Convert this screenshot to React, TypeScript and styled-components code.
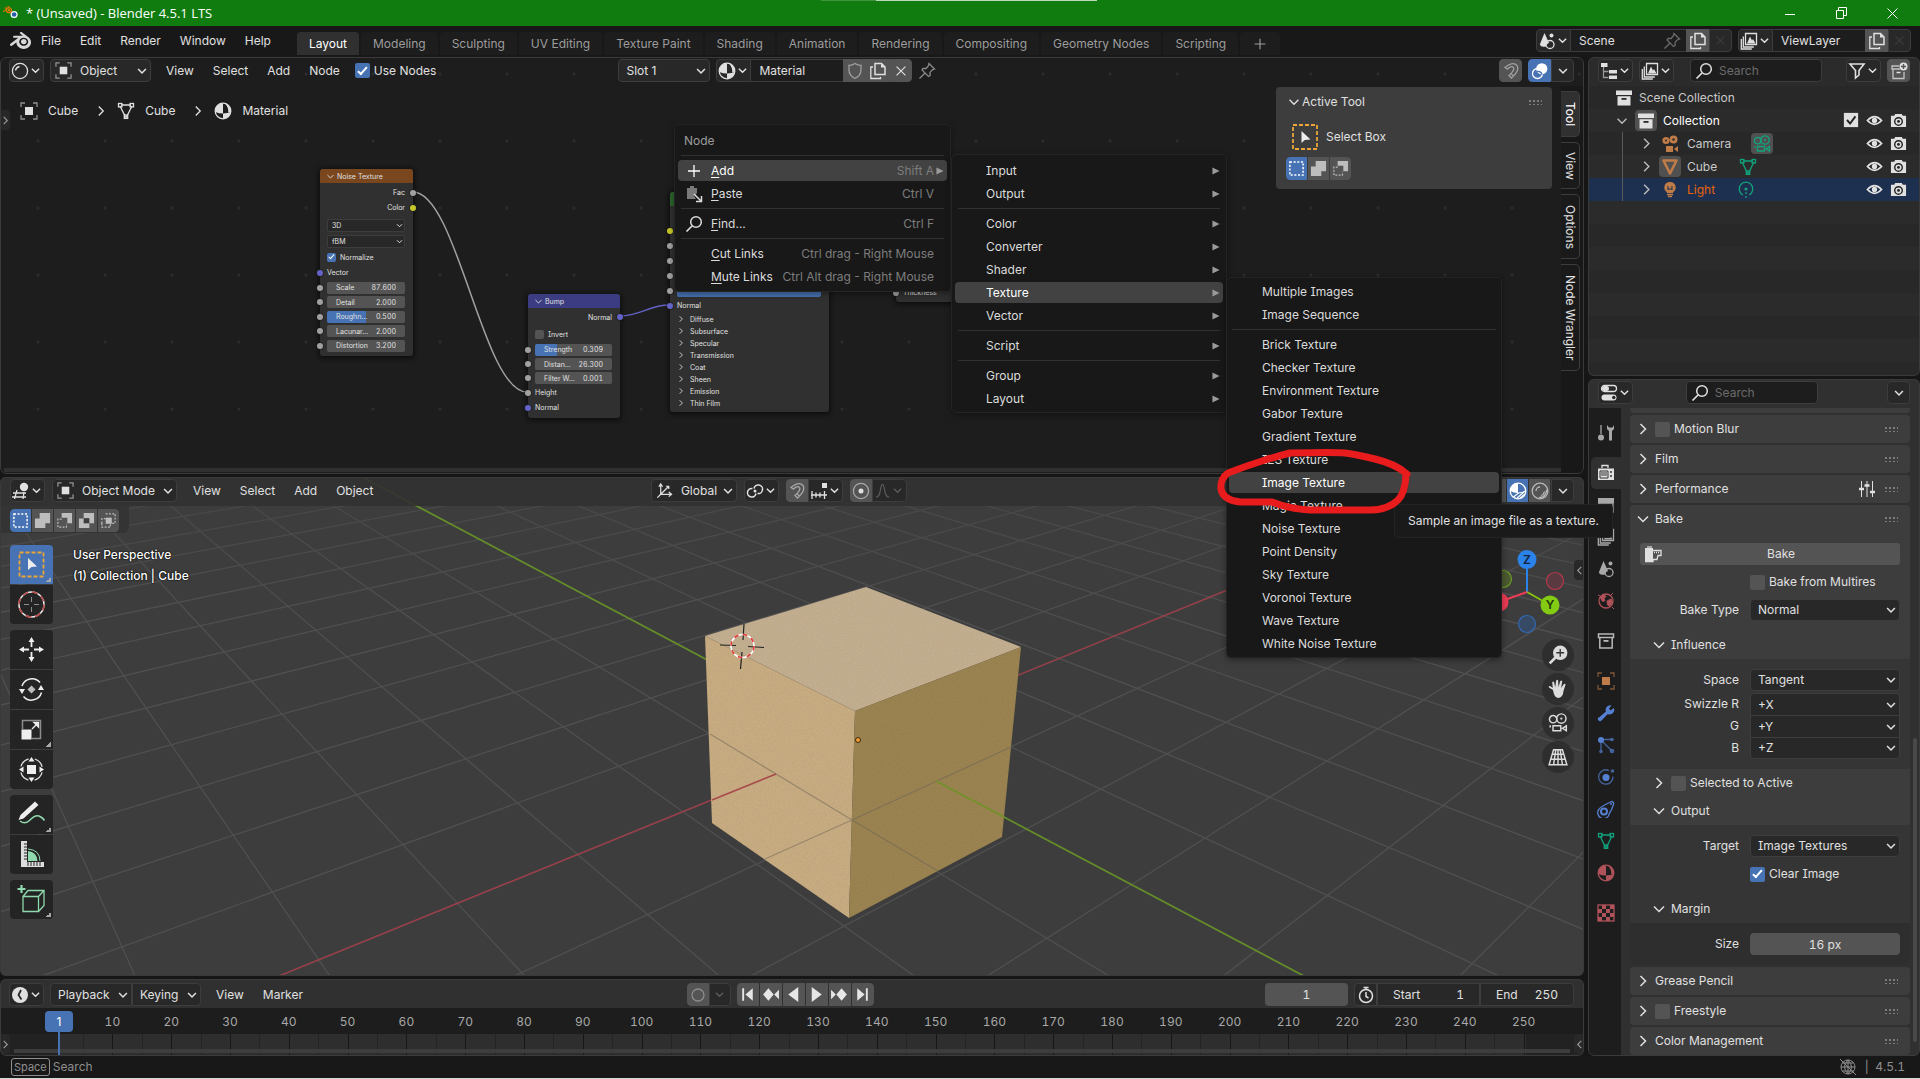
import React from "react";
import styled, { createGlobalStyle, css } from "styled-components";
import { SiBlender } from "react-icons/si";

/* ------------------------------------------------------------------ theme */

const c = {
  text: "#e0e0e0",
  bright: "#ffffff",
  dim: "#9c9c9c",
  faint: "#6b6b6b",
  blue: "#4772b3",
  widget: "#282828",
  field: "#1d1d1d",
  toggle: "#545454",
  line: "#3d3d3d",
  panel: "#3d3d3d",
  header: "#303030",
  back: "#181818",
  menu: "#181818",
  orange: "#c07c48",
  green: "#12a37c",
  red: "#b0525a",
  mod: "#5680d2",
};

const Global = createGlobalStyle`
  *, *::before, *::after { box-sizing: border-box; }
  html, body { margin: 0; padding: 0; background: #161616; }
  body, button, input, select {
    font-family: Inter, "Noto Sans", sans-serif;
    font-size: 12px;
    line-height: 16px;
    font-feature-settings: "cv08";
    color: ${c.text};
  }
  button, input, select { margin: 0; padding: 0; border: 0; background: none; outline: none; }
  button { display: flex; align-items: center; justify-content: center; white-space: nowrap; }
`;

/* ------------------------------------------------------------------ icons */

const st = { fill: "none", stroke: "currentColor", strokeWidth: 1.3 } as const;
const fl = { fill: "currentColor" } as const;

const icons: Record<string, React.ReactNode> = {
  chevron: <path d="M4 6.500l5 5 5-5" {...st} strokeWidth={2} />,
  right: <path d="M6.500 4l5 5-5 5" {...st} strokeWidth={1.500} />,
  left: <path d="M11.500 4l-5 5 5 5" {...st} strokeWidth={1.500} />,
  open: <path d="M4 6.500l5 5 5-5" {...st} strokeWidth={1.500} />,
  tri: <path d="M1 1l16 8-16 8z" {...fl} />,
  plus: <path d="M9 3v12M3 9h12" {...st} />,
  cross: <path d="M4 4l10 10M14 4L4 14" {...st} />,
  object: (
    <>
      <rect x="5" y="5" width="8" height="8" {...fl} />
      <path d="M1 5V1h4M13 1h4v4M17 13v4h-4M5 17H1v-4" {...st} opacity={0.6} />
    </>
  ),
  mesh: (
    <>
      <path d="M3 4l5.500 11h1L15 4M4 3h10" {...st} />
      <rect x="1.500" y="1.500" width="3.400" height="3.400" {...st} />
      <rect x="13.100" y="1.500" width="3.400" height="3.400" {...st} />
      <rect x="7.300" y="13" width="3.400" height="3.400" {...st} />
    </>
  ),
  material: (
    <>
      <circle cx="9" cy="9" r="7.800" {...st} />
      <path d="M9 1.200A7.800 7.800 0 0 0 1.300 10Q5 11.500 9 11.500z" {...fl} />
      <path d="M9 11.500q5-.2 7.700-1.500A7.800 7.800 0 0 1 9 16.800z" {...fl} />
      <path d="M11 1.500a7.800 7.800 0 0 1 5.800 8l-2.500 1.200Q14.500 5 11 1.500z" {...fl} />
    </>
  ),
  sphere: (
    <>
      <circle cx="9" cy="9" r="7.600" {...st} />
      <path d="M4.500 8.500a5 5 0 0 1 4-4" {...st} />
    </>
  ),
  matSphere: (
    <>
      <circle cx="9" cy="9" r="7.800" {...st} />
      <path d="M9 1.200v9.800q-4.500 0-7.700-2A7.800 7.800 0 0 1 9 1.200z" {...fl} />
      <path d="M8 16l7-6M11 16l5-4M4.500 15l5-4" {...st} strokeWidth={1.100} />
      <path d="M9 11q4.500 0 7.700-2" {...st} strokeWidth={1.100} />
    </>
  ),
  rendered: (
    <>
      <circle cx="9" cy="9" r="7.800" {...st} />
      <path d="M5 9a4 4 0 0 1 4-4M8 15.500a7 7 0 0 0 7.500-7.500M10 13.500a5 5 0 0 0 3.500-4" {...st} />
    </>
  ),
  shield: <path d="M9 1.500q3 2 6 1.800v4.700q0 5.500-6 8.500-6-3-6-8.500V3.300q3 .2 6-1.800z" {...st} />,
  dup: (
    <>
      <path d="M6 1.500h6.500L16 5v7.500H6z" {...st} strokeWidth={1.500} />
      <path d="M12 1.500V5.500h4" {...fl} />
      <path d="M4 5H1.800v11.500h9.700V15" {...st} />
    </>
  ),
  pin: (
    <path d="M11 1.500L16.500 7l-1.800.6-2.700 2.800.2 3.100-1.700 1L4 8l1-1.700 3.100.2L10.600 3.500zM6.800 11.200L1.500 16.500" {...st} />
  ),
  magnet: (
    <path
      d="M3 5.500l2.500 1.600q4.500-4 6 -1.500 1.500 2-2.500 6l2.500 2.400q6-6 3.500-10.500Q11-1 3 5.500zM9 11.600L7 13.500l2.500 2.500 2-2"
      {...st}
    />
  ),
  overlay: (
    <>
      <circle cx="6.500" cy="11.500" r="5" {...st} />
      <circle cx="10.800" cy="6.800" r="5.600" {...fl} />
      <path d="M6 9.500a5 5 0 0 1 5.300 3" fill="none" stroke="#4772b3" strokeWidth="1.300" />
    </>
  ),
  search: (
    <>
      <circle cx="11" cy="7" r="5.300" {...st} strokeWidth={1.500} />
      <path d="M7 11l-5.500 5.500" {...st} strokeWidth={1.700} />
    </>
  ),
  filter: <path d="M2 2h14l-5 6.500v4.500L7.500 16V8.500z" {...st} strokeWidth={1.600} />,
  scene: (
    <>
      <path d="M6.500 1l4.500 10a4 4 0 0 0-3 3.500q-6 1-6-2.500z" {...fl} />
      <circle cx="12" cy="12.500" r="4" {...st} />
      <circle cx="13.500" cy="3.500" r="2" {...fl} />
    </>
  ),
  viewlayer: (
    <>
      <path d="M5.500 1.500h11v11h-11z" {...st} />
      <path d="M7 11.500l3-7 2 4 1-1.500 2.500 4.500z" {...fl} />
      <path d="M3.300 4.500v10.500h10.500M1.300 7v10h10.500" {...st} />
    </>
  ),
  outliner: (
    <>
      <rect x="1" y="1" width="6.500" height="4" {...fl} />
      <path d="M3.500 5v10.500h5M3.500 9.500h5" {...st} opacity={0.6} />
      <rect x="9" y="8" width="8" height="3.500" {...fl} />
      <rect x="9" y="13.500" width="8" height="3.500" {...fl} />
    </>
  ),
  collection: (
    <>
      <rect x="1" y="1.500" width="16" height="4.500" {...fl} />
      <path d="M2.500 7.200h13V16.500h-13z" {...fl} />
      <rect x="6.500" y="9" width="5" height="1.800" fill="#282828" />
    </>
  ),
  collectionLine: (
    <>
      <path d="M1.500 2h15v3.500h-15zM2.800 5.500V16h12.400V5.500" {...st} strokeWidth={1.500} />
      <rect x="6.500" y="8" width="5" height="1.800" {...fl} />
    </>
  ),
  newCollection: (
    <>
      <path d="M9 4H2v3h8M3 7v9.500h11V10" {...st} opacity={0.8} />
      <path d="M6.500 10.500h4" {...st} />
      <circle cx="13.500" cy="4.500" r="4" {...fl} />
      <path d="M13.500 2v5M11 4.500h5" stroke="#545454" strokeWidth="1.400" />
    </>
  ),
  camera: (
    <>
      <circle cx="5" cy="5.500" r="3.600" {...fl} />
      <circle cx="12.500" cy="4.500" r="4" {...fl} />
      <circle cx="5" cy="5.500" r="1" fill="#2b2b2b" />
      <circle cx="12.500" cy="4.500" r="1.200" fill="#2b2b2b" />
      <path d="M5 11h7v6H5zM13 14l4-3v6z" {...fl} />
    </>
  ),
  cameraLine: (
    <>
      <circle cx="4.600" cy="5.600" r="3.300" {...st} />
      <circle cx="12" cy="5" r="4.200" {...st} />
      <circle cx="12" cy="5" r="1" {...fl} />
      <path d="M4.500 11.500h7V16h-7zM13 13.800l3.500-2.300V16zM2 11v2" {...st} />
    </>
  ),
  cubeTri: <path d="M2.500 2.500h13L9 15.500z" {...st} strokeWidth={2.600} strokeLinejoin="round" />,
  bulb: (
    <>
      <path d="M9 1a5.500 5.500 0 0 1 3.300 10L12 12H6l-.3-1A5.500 5.500 0 0 1 9 1z" {...fl} />
      <path d="M6 13.500h6M7 15.500h4" {...st} />
      <path d="M7 5v4M11 5v4M7 8h4" stroke="#1e304f" strokeWidth="1" />
    </>
  ),
  lightData: (
    <>
      <path d="M6 14a6.800 6.800 0 1 1 6 0" {...st} />
      <circle cx="9" cy="8" r="1.600" {...fl} />
      <path d="M9 11v2M9 15v2" {...st} />
    </>
  ),
  tick: (
    <>
      <rect x="1" y="1" width="16" height="16" {...fl} />
      <path d="M4.500 9l3.500 4 6-8" fill="none" stroke="#222" strokeWidth="2.200" />
    </>
  ),
  eye: (
    <>
      <path d="M1.500 9Q9 1 16.500 9 9 17 1.500 9z" {...st} strokeWidth={1.800} />
      <circle cx="9" cy="9" r="2.800" {...fl} />
    </>
  ),
  photo: (
    <>
      <path d="M1 4h3.500l1-2h7l1 2H17v12H1z" {...fl} />
      <circle cx="9" cy="10" r="4" fill="none" stroke="#222" strokeWidth="1.500" />
      <circle cx="9" cy="10" r="1.500" fill="#222" />
    </>
  ),
  props: (
    <>
      <rect x="1.500" y="1.500" width="15" height="6" rx="3" {...st} />
      <rect x="2" y="2" width="7" height="5" rx="2.500" {...fl} />
      <rect x="1.500" y="10.500" width="15" height="6" rx="3" {...fl} />
      <circle cx="13.800" cy="13.500" r="1.700" fill="#282828" />
    </>
  ),
  tools: (
    <>
      <path d="M4 1v9" {...st} />
      <circle cx="4" cy="13.500" r="3" {...fl} />
      <path d="M10 1v4l2 2v9.500h3V7l2-2V1l-1.500 2.500h-3.500z" {...fl} />
    </>
  ),
  render: (
    <>
      <path d="M5 4V1.500h6V4" {...st} />
      <path d="M1 4.500h16V16H1z" {...fl} />
      <path d="M3 7h8v7H3zM4 9h6M4 11h6" stroke="#303030" strokeWidth="1" fill="none" />
      <circle cx="14" cy="8" r="1" fill="#303030" />
      <circle cx="14" cy="12" r="1" fill="#303030" />
    </>
  ),
  output: (
    <>
      <path d="M1 2h16v5H1z" {...fl} />
      <path d="M2 7h14v9H2zM5 10h8" {...st} />
    </>
  ),
  world: (
    <>
      <circle cx="9" cy="9" r="7" {...st} />
      <path d="M3 5l4-2.500 2 2-2 2 1 2-2.500 1zM10 9l4-2 1.500 3-3 4-2-1zM1 3l2 1M15 15l2 2M16 1l-2 2" {...fl} stroke="currentColor" />
    </>
  ),
  wrench: (
    <path d="M2 13.500l7-6a4.500 4.500 0 0 1 5.500-6L12 4.500 13.500 6.500 16.800 4a4.500 4.500 0 0 1-6 6L4.500 16.500a2.100 2.100 0 0 1-3-3z" {...fl} />
  ),
  particles: (
    <>
      <path d="M4 5v9M6 3.500h8M5.500 5.500L14 14" {...st} opacity={0.7} />
      <circle cx="4" cy="4" r="3" {...fl} />
      <circle cx="15" cy="3.500" r="1.800" {...fl} opacity={0.7} />
      <circle cx="4" cy="15.500" r="1.800" {...fl} opacity={0.7} />
      <circle cx="15" cy="15" r="2.300" {...fl} opacity={0.7} />
    </>
  ),
  physics: (
    <>
      <path d="M12 2.500a7.200 7.200 0 1 0 4 6" {...st} opacity={0.7} />
      <circle cx="9" cy="9.500" r="3.500" {...fl} />
      <circle cx="15.500" cy="3" r="1.800" {...fl} opacity={0.7} />
    </>
  ),
  constraint: (
    <>
      <path d="M1.800 9.500Q3 7 14.500 1.500q3 .5 1.800 3.500-2 6-4 8.500A5.800 5.800 0 1 1 1.800 9.500z" {...st} />
      <circle cx="7" cy="11.500" r="3" {...st} strokeWidth={2} />
      <circle cx="14" cy="4" r="1" {...fl} />
    </>
  ),
  texture: (
    <>
      <rect x="1" y="1" width="16" height="16" {...st} />
      <path d="M5 1h4v4h4V1h4v4h-4v4H9V5H5zM1 5h4v4H1zM5 9h4v4H5zM13 9h4v4h-4zM1 13h4v4H1zM9 13h4v4H9z" {...fl} />
    </>
  ),
  sliders: (
    <>
      <path d="M3.500 1v16M9 1v16M14.500 1v16" {...st} strokeWidth={1} />
      <path d="M1 9h5M6.500 5.500h5M12 12h5" {...st} strokeWidth={2.400} />
    </>
  ),
  bake: (
    <>
      <path d="M1 3h8v14H1z" {...fl} />
      <path d="M3 1h5v2H3z" {...fl} opacity={0.6} />
      <path d="M9 5.500h8v5h-3l-1 4H9v2H1" {...st} />
      <path d="M10 7.500h6" {...st} strokeDasharray="1 1" />
    </>
  ),
  gridBall: (
    <>
      <path d="M5 8L2.500 17M12 10l-1 7M1 11h13M0 15h14" {...st} />
      <circle cx="12" cy="5" r="4.200" {...fl} />
    </>
  ),
  axes: (
    <path d="M5 3v10h11M5 13L1.500 16.500M3 5l2-3 2 3M13.500 10.500l3 2.500-3 2.500M5 13l8-8M10.500 4.500h3v3" {...st} />
  ),
  pivot: (
    <>
      <path d="M8 6.500a4.300 4.300 0 1 1 3.500 5M10 11.500a4.300 4.300 0 1 1-3.500-5" {...st} strokeWidth={1.500} />
      <circle cx="9" cy="9" r="1.500" {...fl} />
    </>
  ),
  snapInc: (
    <>
      <path d="M1 13h16M2 9v8M6 10.500v5M10 10.500v5M14.500 9v8" {...st} />
      <rect x="12" y="1" width="5" height="5" {...fl} />
    </>
  ),
  proportional: (
    <>
      <circle cx="9" cy="9" r="7.600" {...st} opacity={0.6} />
      <circle cx="9" cy="9" r="2.500" {...fl} />
    </>
  ),
  falloff: <path d="M2 16q4 0 5-9 2-9 4 0 1 9 5 9" {...st} />,
  clock: (
    <>
      <circle cx="9" cy="9" r="8" {...fl} />
      <path d="M10 4L7.500 9l3 4.500" stroke="#282828" strokeWidth="1.800" fill="none" />
    </>
  ),
  stopwatch: (
    <>
      <circle cx="9" cy="10" r="6.500" {...st} strokeWidth={1.500} />
      <path d="M9 6v4.500l2.500 1.500M9 1v2.500M6.500 1.500h5" {...st} strokeWidth={1.500} />
    </>
  ),
  record: <circle cx="9" cy="9" r="6" {...st} />,
  first: <path d="M4 3h1.800v12H4zM14 3v12L7 9z" {...fl} />,
  prevKey: <path d="M7 3l5 6-5 6-5-6zM17 4.500v9L12.500 9z" {...fl} />,
  playBack: <path d="M13.500 2v14L4 9z" {...fl} />,
  play: <path d="M4.500 2v14L14 9z" {...fl} />,
  nextKey: <path d="M11 3l5 6-5 6-5-6zM1 4.500v9L5.500 9z" {...fl} />,
  last: <path d="M12.200 3H14v12h-1.800zM4 3v12l7-6z" {...fl} />,
  online: (
    <>
      <circle cx="9" cy="9" r="7" {...st} strokeWidth={1} />
      <path d="M2 9h14M9 2v14M3.500 5h11M3.500 13h11M9 2q-7 7 0 14M9 2q7 7 0 14M1 1l16 16" {...st} strokeWidth={1} />
    </>
  ),
  paste: (
    <>
      <path d="M2 3h3V1h4v2h3v5l-3 3 2 3H2z" {...fl} opacity={0.5} />
      <path d="M9 9l7 7M16.500 11v5.500H11" {...st} strokeWidth={1.500} />
    </>
  ),
  selNew: <rect x="2" y="2" width="14" height="14" {...st} strokeWidth={1.600} strokeDasharray="2.200 1.700" />,
  selAdd: <path d="M6 1h11v11h-5v5H1V7h5z" {...fl} />,
  selSub: (
    <>
      <path d="M6 1h11v11h-5V6H6z" {...fl} />
      <path d="M6 7.500H2V16h9v-3.500" {...st} strokeDasharray="2 1.500" />
    </>
  ),
  selDiff: (
    <>
      <path d="M6 1h11v11h-5v5H1V7h5z" {...fl} />
      <rect x="6" y="6.500" width="6" height="5.500" fill="#3d3d3d" />
    </>
  ),
  selAnd: (
    <>
      <path d="M6 2h10v10h-4M2 12V7h4M2 12v4h9v-3" {...st} strokeDasharray="2 1.500" />
      <rect x="6" y="6" width="6.500" height="6.500" {...fl} />
    </>
  ),
  zoomIn: (
    <>
      <path d="M7 11l-5.500 5.500" {...st} strokeWidth={2.400} />
      <circle cx="11" cy="7" r="6.500" {...fl} />
      <path d="M11 3.500v7M7.500 7h7" stroke="#333" strokeWidth="1.200" />
    </>
  ),
  hand: (
    <path
      d="M4.500 10L1.500 8Q0 7 .8 6.500 2 6 4.300 8L3.800 3q.9-1.500 1.700 0l1 4.500L7.300 1.500q1-1.500 1.900 0l.2 6 1.600-5.500q1.200-1.200 1.800.2L11.800 8l2.500-3.500q1.400-.8 1.500.6L14 10.500q-.5 6.500-5 6.500-3.500 0-4.500-7z"
      {...fl}
    />
  ),
  persp: <path d="M5 2.500h8l4 13.500H1zM4 6.500h10M2.500 11h13M9 2.500V16M7 2.500L5 16M11 2.500L13 16" {...st} strokeWidth={1.300} />,
};

const Svg = styled.svg<{ $size: number; $color?: string }>`
  width: ${(p) => p.$size}px;
  height: ${(p) => p.$size}px;
  flex: none;
  display: block;
  color: ${(p) => p.$color || "inherit"};
`;

const Icon = ({ name, size = 18, color }: { name: string; size?: number; color?: string }) => (
  <Svg viewBox="0 0 18 18" $size={size} $color={color} aria-hidden="true">
    {icons[name]}
  </Svg>
);

/* --------------------------------------------------------------- controls */

const HeaderBtn = styled.button<{ $on?: boolean; $grey?: boolean; $w?: number; $dim?: boolean }>`
  height: 23px;
  width: ${(p) => p.$w || 36}px;
  flex: none;
  background: ${(p) => (p.$on ? c.blue : p.$grey ? c.toggle : c.widget)};
  border: 1px solid ${(p) => (p.$on ? c.blue : p.$grey ? c.toggle : c.line)};
  border-radius: 4px;
  color: ${(p) => (p.$dim ? "#5a5a5a" : c.text)};
`;

const Joined = styled.div<{ $gap?: boolean }>`
  display: flex;
  flex: none;
  ${HeaderBtn} { border-radius: 0; }
  ${(p) => p.$gap && css`gap: 1px;`}
  > *:first-child { border-radius: 4px 0 0 4px; }
  > *:last-child { border-radius: 0 4px 4px 0; }
`;

const MenuBtn = styled.button`
  height: 22px;
  padding: 0 9px;
  flex: none;
`;

const SelectBox = styled.label<{ $w?: string; $h?: number }>`
  display: grid;
  grid-template-columns: auto 1fr auto;
  align-items: center;
  width: ${(p) => p.$w || "100%"};
  height: ${(p) => p.$h || 23}px;
  flex: none;
  background: ${c.widget};
  border: 1px solid ${c.line};
  border-radius: 4px;
  padding: 0 1px 0 4px;
`;

const NativeSelect = styled.select<{ $small?: boolean; $indent?: number }>`
  appearance: none;
  min-width: 0;
  width: 100%;
  padding-left: ${(p) => p.$indent || 0}px;
  ${(p) => p.$small && css`font-size: 7px; line-height: 9px;`}
`;

const Select = ({ value, label, icon, w, h }: { value: string; label: string; icon?: string; w?: string; h?: number }) => (
  <SelectBox $w={w} $h={h}>
    {icon ? <Icon name={icon} size={17} /> : <span />}
    <NativeSelect aria-label={label} defaultValue={value} $indent={icon ? 8 : 3}>
      <option>{value}</option>
    </NativeSelect>
    <Icon name="chevron" size={14} />
  </SelectBox>
);

const Check = styled.input.attrs({ type: "checkbox" })<{ $s?: number }>`
  appearance: none;
  width: ${(p) => p.$s || 15}px;
  height: ${(p) => p.$s || 15}px;
  flex: none;
  border-radius: 2px;
  background: ${c.toggle};
  display: grid;
  place-items: center;
  &:checked { background: ${c.blue}; }
  &:checked::after {
    content: "";
    width: 35%;
    height: 65%;
    border: solid #fff;
    border-width: 0 ${(p) => (p.$s ? 1 : 2)}px ${(p) => (p.$s ? 1 : 2)}px 0;
    transform: rotate(42deg);
    margin-bottom: 15%;
  }
`;

const CheckLabel = styled.label`
  display: flex;
  align-items: center;
  gap: 4px;
  white-space: nowrap;
`;

const Fill = styled.div<{ $n: number }>`
  flex: ${(p) => p.$n} 1 0;
`;

const SearchBox = styled.label`
  display: flex;
  align-items: center;
  gap: 6px;
  width: 132px;
  height: 23px;
  padding: 0 4px;
  background: ${c.field};
  border: 1px solid ${c.line};
  border-radius: 4px;
  input { width: 80px; }
  input::placeholder { color: #6b6b6b; opacity: 1; }
`;

/* ------------------------------------------------------------------ frame */

const Root = styled.div`
  position: relative;
  display: flex;
  flex-direction: column;
  height: 100vh;
  overflow: hidden;
  background: #161616;
`;

const TitleBar = styled.header`
  display: flex;
  align-items: center;
  height: 26px;
  flex: none;
  padding: 0 19px 0 3px;
  gap: 6px;
  background: #107c10;
  color: #fff;
  font-family: "Open Sans", "Noto Sans", sans-serif;
  font-size: 13px;
`;

const TopEdge = styled.div`
  position: absolute;
  top: 0;
  left: 821px;
  width: 276px;
  height: 1px;
  background: linear-gradient(90deg, #3f943f 20%, #b9d8b9 20%);
`;

const WinBtn = styled.button`
  width: 18px;
  height: 18px;
  margin-left: 27px;
  color: #fff;
`;

const TopBar = styled.nav`
  display: flex;
  height: 31px;
  flex: none;
  padding: 0 9px 0 10px;
  background: ${c.back};
`;

const TopGroup = styled.div<{ $gap: number }>`
  display: flex;
  align-items: center;
  gap: ${(p) => p.$gap}px;
  height: 29px;
`;

const Tabs = styled.div`
  display: flex;
  align-items: flex-end;
  gap: 2px;
  height: 29px;
  margin-left: 17px;
`;

const Tab = styled.button<{ $on?: boolean }>`
  height: 23px;
  padding: 0 12px;
  border-radius: 4px 4px 0 0;
  background: ${(p) => (p.$on ? c.header : "#1d1d1d")};
  color: ${(p) => (p.$on ? c.bright : c.dim)};
`;

const NameInput = styled.input<{ $w: number }>`
  width: ${(p) => p.$w}px;
  height: 23px;
  padding: 0 8px;
  background: ${c.field};
  border: solid ${c.line};
  border-width: 1px 0;
`;

const FieldWithPin = styled.div`
  display: flex;
  align-items: center;
  height: 23px;
  background: ${c.field};
  border: solid ${c.line};
  border-width: 1px 0;
  padding-right: 5px;
  color: ${c.faint};
  ${NameInput} { border: 0; height: 21px; }
`;

const Work = styled.main`
  display: grid;
  grid-template-columns: 1fr 332px;
  gap: 4px;
  flex: 1;
  min-height: 0;
`;

const Column = styled.div`
  display: flex;
  flex-direction: column;
  gap: 3px;
  min-width: 0;
  min-height: 0;
`;

const Area = styled.section<{ $grow: number; $bg: string }>`
  position: relative;
  display: flex;
  flex-direction: column;
  flex: ${(p) => p.$grow} 1 0;
  min-height: 0;
  overflow: hidden;
  border-radius: 6px;
  background: ${(p) => p.$bg};
  &::after {
    content: "";
    position: absolute;
    inset: 0;
    border: 1px solid #3a3a3a;
    border-radius: 6px;
    pointer-events: none;
  }
`;

const AreaHeader = styled.div<{ $bg?: string; $pad?: number; $gap?: number; $low?: boolean }>`
  position: relative;
  display: flex;
  align-items: center;
  flex: none;
  height: 29px;
  padding: ${(p) => (p.$low ? "2px 10px 0" : "0 10px 2px")};
  padding-left: ${(p) => p.$pad || 9}px;
  gap: ${(p) => p.$gap || 6}px;
  background: ${(p) => p.$bg || "transparent"};
`;

const Menus = styled.div`
  display: flex;
  gap: 1px;
`;

/* ------------------------------------------------------------ node editor */

const Canvas = styled.div`
  position: absolute;
  inset: 0;
  background-image: radial-gradient(circle at 33px 33px, #2c2c2c 1px, transparent 2px);
  background-size: 67px 67px;
  background-position: 5px 51px;
`;

const Wires = styled.svg`
  position: absolute;
  inset: 0;
  width: 100%;
  height: 100%;
`;

const NodeBox = styled.div<{ $x: number; $y: number; $w: number; $h?: number }>`
  position: absolute;
  left: ${(p) => p.$x}px;
  top: ${(p) => p.$y}px;
  width: ${(p) => p.$w}px;
  ${(p) => p.$h && css`height: ${p.$h}px;`}
  background: #303030;
  border-radius: 3px;
  box-shadow: 0 1px 5px 1px #0c0c0c;
  padding-bottom: 3px;
  font-size: 7px;
  line-height: 9px;
`;

const NodeTitle = styled.div<{ $bg: string }>`
  display: flex;
  align-items: center;
  gap: 1px;
  height: 14px;
  padding-left: 5px;
  margin-bottom: 2px;
  border-radius: 3px 3px 0 0;
  background: ${(p) => p.$bg};
`;

const NodeRow = styled.div<{ $right?: boolean; $h?: number }>`
  position: relative;
  display: flex;
  align-items: center;
  justify-content: ${(p) => (p.$right ? "flex-end" : "flex-start")};
  height: ${(p) => p.$h || 15}px;
  padding: 0 8px 0 7px;
`;

const Socket = styled.i<{ $c: string; $right?: boolean }>`
  position: absolute;
  ${(p) => (p.$right ? "right" : "left")}: -3px;
  top: calc(50% - 3px);
  width: 6px;
  height: 6px;
  border-radius: 50%;
  background: ${(p) => p.$c};
  box-shadow: 0 0 0 1px #1a1a1a80;
`;

const NumField = styled.label<{ $fill?: number }>`
  display: flex;
  align-items: center;
  justify-content: space-between;
  width: 100%;
  height: 12px;
  padding: 0 9px;
  border-radius: 2px;
  background: linear-gradient(90deg, ${c.blue} ${(p) => p.$fill || 0}%, ${c.toggle} ${(p) => p.$fill || 0}%);
  white-space: nowrap;
  input {
    width: 26px;
    font-size: 7px;
    line-height: 9px;
    text-align: right;
    font-variant-numeric: tabular-nums;
  }
`;

const NodeSelectBox = styled.label`
  display: grid;
  grid-template-columns: 1fr auto;
  align-items: center;
  width: 100%;
  height: 13px;
  padding-left: 4px;
  border: 1px solid ${c.line};
  border-radius: 2px;
  background: ${c.widget};
`;

const SubPanelRow = styled.div`
  display: flex;
  align-items: center;
  gap: 4px;
  height: 12px;
  padding-left: 6px;
`;

const GREY = "#a1a1a1";
const PURPLE = "#6363c7";
const YELLOW = "#c7c729";

const Num = ({ label, value, fill, h = 14 }: { label: string; value: string; fill?: number; h?: number }) => (
  <NodeRow $h={h}>
    <Socket $c={GREY} />
    <NumField $fill={fill}>
      {label}
      <input defaultValue={value} />
    </NumField>
  </NodeRow>
);

const NodeSelect = ({ value, label }: { value: string; label: string }) => (
  <NodeRow $h={16}>
    <NodeSelectBox>
      <NativeSelect $small aria-label={label} defaultValue={value}>
        <option>{value}</option>
      </NativeSelect>
      <Icon name="chevron" size={9} />
    </NodeSelectBox>
  </NodeRow>
);

const NodeBody = styled.div`
  position: relative;
  display: flex;
  flex: 1;
  min-height: 0;
  justify-content: space-between;
`;

const Crumbs = styled.div`
  display: flex;
  align-items: center;
  align-self: flex-start;
  height: 49px;
  padding-left: 20px;
`;

const Crumb = styled.span`
  display: flex;
  align-items: center;
  gap: 10px;
`;

const CrumbSep = styled.span`
  padding: 0 8px 0 15px;
`;

const SideToggle = styled.button<{ $right?: boolean; $y: number }>`
  position: absolute;
  ${(p) => (p.$right ? "right: 0" : "left: 0")};
  top: ${(p) => p.$y}px;
  width: 10px;
  height: 20px;
  background: #282828;
  border-radius: ${(p) => (p.$right ? "4px 0 0 4px" : "0 4px 4px 0")};
  color: ${c.dim};
`;

const Sidebar = styled.div`
  display: flex;
  gap: 9px;
`;

const ToolPanel = styled.div`
  align-self: flex-start;
  width: 276px;
  height: 102px;
  margin-top: 1px;
  padding: 0 10px;
  border-radius: 4px;
  background: ${c.panel};
`;

const ToolHead = styled.div`
  display: flex;
  align-items: center;
  height: 30px;
  > :last-child { margin-left: auto; }
`;

const ToolLine = styled.div`
  display: flex;
  align-items: center;
  gap: 8px;
  height: 40px;
  padding-left: 6px;
`;

const Grip = styled.span`
  width: 13px;
  height: 5px;
  flex: none;
  background: radial-gradient(circle at 1px 1px, #7d7d7d 1px, transparent 1px) 0 0 / 4px 4px;
`;

const VTabs = styled.div`
  display: flex;
  flex-direction: column;
  gap: 5px;
  width: 23px;
  padding: 5px 4px 0 0;
  background: ${c.back};
`;

const VTab = styled.button<{ $on?: boolean; $h: number }>`
  writing-mode: vertical-rl;
  width: 19px;
  height: ${(p) => p.$h}px;
  border: 1px solid ${c.line};
  border-left: 0;
  border-radius: 0 5px 5px 0;
  background: ${(p) => (p.$on ? c.header : "#1a1a1a")};
  color: ${(p) => (p.$on ? c.bright : c.text)};
`;

const HBar = styled.div`
  position: absolute;
  left: 4px;
  right: 23px;
  bottom: 2px;
  height: 4px;
  background: #303030;
`;

const SelectToolSvg = ({ size = 26 }: { size?: number }) => (
  <Svg viewBox="0 0 26 26" $size={size} aria-hidden="true">
    <rect x="1" y="1" width="24" height="24" fill="none" stroke="#eba637" strokeWidth="1.800" strokeDasharray="4 2" />
    <path d="M9.500 7v12l3.300-3 5.700-.5z" fill="#ececec" />
  </Svg>
);

const SelectModes = ({ list }: { list: string[] }) => (
  <Joined $gap>
    {list.map((n, i) => (
      <HeaderBtn key={n} $w={21} $on={i === 0} $grey={i > 0} aria-label={n}>
        <Icon name={n} size={17} color={i ? "#bdbdbd" : "#fff"} />
      </HeaderBtn>
    ))}
  </Joined>
);

const Drop = ({ icon, label }: { icon: string; label: string }) => (
  <HeaderBtn $w={35} aria-label={label}>
    <Icon name={icon} size={18} />
    <Icon name="chevron" size={13} />
  </HeaderBtn>
);

const NodeEditor = () => (
  <Area $grow={417} $bg="#1d1d1d">
    <Canvas>
      <Wires>
        <path d="M413 135C457 135 483 335 527 335" fill="none" stroke="#a1a1a1" strokeWidth="1.500" />
        <path d="M620 259C640 259 650 248 669 248" fill="none" stroke={PURPLE} strokeWidth="1.500" />
      </Wires>
      <NodeBox $x={320} $y={112} $w={93}>
        <NodeTitle $bg="#79461d">
          <Icon name="open" size={11} />
          Noise Texture
        </NodeTitle>
        <NodeRow $right>Fac<Socket $c={GREY} $right /></NodeRow>
        <NodeRow $right>Color<Socket $c={YELLOW} $right /></NodeRow>
        <NodeRow $h={2} />
        <NodeSelect value="3D" label="Dimensions" />
        <NodeSelect value="fBM" label="Noise type" />
        <NodeRow $h={16}>
          <CheckLabel><Check $s={9} defaultChecked />Normalize</CheckLabel>
        </NodeRow>
        <NodeRow>Vector<Socket $c={PURPLE} /></NodeRow>
        <Num label="Scale" value="87.600" h={15} />
        <Num label="Detail" value="2.000" />
        <Num label="Roughn..." value="0.500" fill={50} h={15} />
        <Num label="Lacunar..." value="2.000" />
        <Num label="Distortion" value="3.200" h={15} />
      </NodeBox>
      <NodeBox $x={528} $y={237} $w={92}>
        <NodeTitle $bg="#3c3c83">
          <Icon name="open" size={11} />
          Bump
        </NodeTitle>
        <NodeRow $right $h={14}>Normal<Socket $c={PURPLE} $right /></NodeRow>
        <NodeRow $h={3} />
        <NodeRow>
          <CheckLabel><Check $s={9} />Invert</CheckLabel>
        </NodeRow>
        <Num label="Strength" value="0.309" fill={29} h={15} />
        <Num label="Distan..." value="26.300" />
        <Num label="Filter W..." value="0.001" />
        <NodeRow>Height<Socket $c={GREY} /></NodeRow>
        <NodeRow>Normal<Socket $c={PURPLE} /></NodeRow>
      </NodeBox>
      <NodeBox $x={670} $y={135} $w={159}>
        <NodeTitle $bg="#2b652b" />
        <NodeRow />
        <NodeRow><Socket $c={YELLOW} /></NodeRow>
        <NodeRow><Socket $c={GREY} /></NodeRow>
        <NodeRow><Socket $c={GREY} /></NodeRow>
        <NodeRow><Socket $c={GREY} /></NodeRow>
        <NodeRow><Socket $c={GREY} /><NumField $fill={100} as="div" /></NodeRow>
        <NodeRow>Normal<Socket $c={PURPLE} /></NodeRow>
        {["Diffuse", "Subsurface", "Specular", "Transmission", "Coat", "Sheen", "Emission", "Thin Film"].map((n) => (
          <SubPanelRow key={n}>
            <Icon name="right" size={10} />
            {n}
          </SubPanelRow>
        ))}
      </NodeBox>
      <NodeBox $x={896} $y={160} $w={93} $h={85}>
        <NodeTitle $bg="#541f28" />
        <NodeRow $h={52} />
        <NodeRow>Thickness<Socket $c={GREY} /></NodeRow>
      </NodeBox>
    </Canvas>
    <AreaHeader>
      <Drop icon="sphere" label="Editor type" />
      <Select value="Object" label="Shader type" icon="object" w="101px" />
      <Menus>
        {["View", "Select", "Add", "Node"].map((m) => <MenuBtn key={m}>{m}</MenuBtn>)}
      </Menus>
      <CheckLabel><Check defaultChecked />Use Nodes</CheckLabel>
      <Fill $n={174} />
      <Select value="Slot 1" label="Material slot" w="92px" />
      <Joined>
        <Drop icon="material" label="Browse material" />
        <NameInput $w={92} defaultValue="Material" aria-label="Material name" />
        <HeaderBtn $w={23} $grey aria-label="Fake user"><Icon name="shield" color="#a0a0a0" /></HeaderBtn>
        <HeaderBtn $w={23} $grey aria-label="New material"><Icon name="dup" /></HeaderBtn>
        <HeaderBtn $w={23} $grey aria-label="Unlink"><Icon name="cross" size={16} /></HeaderBtn>
      </Joined>
      <Icon name="pin" color="#8a8a8a" />
      <Fill $n={563} />
      <HeaderBtn $w={23} $grey aria-label="Snap"><Icon name="magnet" color="#a0a0a0" /></HeaderBtn>
      <Joined>
        <HeaderBtn $w={23} $on aria-label="Overlays"><Icon name="overlay" color="#fff" /></HeaderBtn>
        <HeaderBtn $w={23} aria-label="Overlay options"><Icon name="chevron" size={14} /></HeaderBtn>
      </Joined>
    </AreaHeader>
    <NodeBody>
      <Crumbs>
        <Crumb><Icon name="object" />Cube</Crumb>
        <CrumbSep><Icon name="right" size={16} /></CrumbSep>
        <Crumb><Icon name="mesh" />Cube</Crumb>
        <CrumbSep><Icon name="right" size={16} /></CrumbSep>
        <Crumb><Icon name="material" />Material</Crumb>
      </Crumbs>
      <Sidebar>
        <ToolPanel>
          <ToolHead><Icon name="open" size={16} />Active Tool<Grip /></ToolHead>
          <ToolLine><SelectToolSvg />Select Box</ToolLine>
          <SelectModes list={["selNew", "selAdd", "selSub"]} />
        </ToolPanel>
        <VTabs>
          <VTab $on $h={46}>Tool</VTab>
          <VTab $h={47}>View</VTab>
          <VTab $h={65}>Options</VTab>
          <VTab $h={107}>Node Wrangler</VTab>
        </VTabs>
      </Sidebar>
    </NodeBody>
    <HBar />
    <SideToggle $y={53} aria-label="Toolbar"><Icon name="right" size={13} /></SideToggle>
  </Area>
);

/* --------------------------------------------------------------- viewport */

const SceneSvg = styled.svg`
  position: absolute;
  inset: 0;
  width: 100%;
  height: 100%;
`;

/* Perspective floor: the origin and the vanishing points of both axes. */
const O = [858, 740];
const VX = [2266, 167];
const VY = [-225, 167];
const STEP_X = 0.0554;
const STEP_Y = 0.0672;

const floorPoint = (i: number, j: number) => {
  const a = i * STEP_X;
  const b = j * STEP_Y;
  const w = 1 + a + b;
  return [(O[0] + a * VX[0] + b * VY[0]) / w, (O[1] + a * VX[1] + b * VY[1]) / w];
};

const ray = (v: number[], p: number[]) => `M${v[0]} ${v[1]}L${v[0] + (p[0] - v[0]) * 30} ${v[1] + (p[1] - v[1]) * 30}`;

const floorLines = Array.from({ length: 46 }, (_, k) => k - 13).filter((k) => k !== 0);

const FloorGrid = () => (
  <g stroke="#505050" strokeWidth="1.300" fill="none">
    {floorLines.map((k) => (
      <g key={k} opacity={k > 10 ? Math.max(0.15, 1 - (k - 10) * 0.05) : 1}>
        <path d={ray(VX, floorPoint(0, k))} />
        {k > -13 && <path d={ray(VY, floorPoint(k, 0))} />}
      </g>
    ))}
  </g>
);

const Scene3D = () => (
  <SceneSvg viewBox="0 477 1584 499" preserveAspectRatio="xMidYMid slice" aria-label="3D scene">
    <defs>
      <linearGradient id="fadeTop" x1="0" y1="477" x2="0" y2="620" gradientUnits="userSpaceOnUse">
        <stop offset="0" stopColor="#3d3d3d" stopOpacity="0.5" />
        <stop offset="1" stopColor="#3d3d3d" stopOpacity="0" />
      </linearGradient>
      <filter id="grain" x="0" y="0" width="100%" height="100%">
        <feTurbulence type="fractalNoise" baseFrequency="0.6" numOctaves="2" />
        <feColorMatrix values="0 0 0 0 0  0 0 0 0 0  0 0 0 0 0  0.5 0 0 0 -0.150" />
        <feComposite in2="SourceGraphic" operator="in" />
      </filter>
    </defs>
    <FloorGrid />
    <rect x="0" y="477" width="1584" height="143" fill="url(#fadeTop)" />
    <path d="M279 976L1500 479" stroke="#98404b" strokeWidth="1.600" />
    <path d="M362 477L1304 976" stroke="#648d2a" strokeWidth="1.800" />
    <path d="M866 587L705 636L855 711L1021 647z" fill="#c3af90" />
    <path d="M705 636L855 711L849 918L712 823z" fill="#c8ac82" />
    <path d="M855 711L1021 647L1002 837L849 918z" fill="#9b8451" />
    <path d="M866 587L705 636L712 823L849 918L1002 837L1021 647z" fill="#000" filter="url(#grain)" opacity="0.14" />
    <path d="M710 734L852 820M852 820L765 859" stroke="#98866a" strokeWidth="1.200" fill="none" />
    <path d="M852 820L938 871M1011 747L852 820" stroke="#7f7154" strokeWidth="1.200" fill="none" />
    <path d="M712 800L776 774" stroke="#a84a4c" strokeWidth="1.600" />
    <path d="M936 781L1004 817" stroke="#729128" strokeWidth="1.800" />
    <circle cx="858" cy="740" r="2.500" fill="#f79a32" stroke="#3a2a10" />
    <g fill="none">
      <path d="M720 645l16 .5M748 646.500l16 1M744 624l-1 16M742 652l-1.500 17" stroke="#222" strokeWidth="1.200" />
      <circle cx="742.500" cy="646" r="11.500" stroke="#fff" strokeWidth="1.600" />
      <circle cx="742.500" cy="646" r="11.500" stroke="#e03a3a" strokeWidth="1.600" strokeDasharray="4.500 4.530" />
    </g>
  </SceneSvg>
);

const SubHeader = styled.div`
  position: relative;
  align-self: flex-start;
  height: 27px;
  padding: 3px 10px;
  border-radius: 0 0 6px 0;
  background: #343434;
`;

const ViewBody = styled.div`
  position: relative;
  display: flex;
  gap: 20px;
  padding: 12px 10px 0;
`;

const ToolShelf = styled.div`
  display: flex;
  flex-direction: column;
  gap: 6px;
`;

const ToolGroup = styled.div`
  display: flex;
  flex-direction: column;
  gap: 1px;
  > :first-child { border-radius: 4px 4px 0 0; }
  > :last-child { border-radius: 0 0 4px 4px; }
  > :only-child { border-radius: 4px; }
`;

const Tool = styled.button<{ $on?: boolean; $more?: boolean }>`
  width: 43px;
  height: 39px;
  background: ${(p) => (p.$on ? c.blue : "#242424")};
  ${(p) =>
    p.$more &&
    css`
      background-image: linear-gradient(135deg, transparent 50%, #a8a8a8 50%);
      background-size: 5px 5px;
      background-repeat: no-repeat;
      background-position: right 2px bottom 2px;
    `}
`;

const ViewInfo = styled.div`
  display: flex;
  flex-direction: column;
  gap: 5px;
  color: #fff;
  font-weight: 500;
  text-shadow: 0 0 2px #000, 0 0 1px #000;
  padding-top: 2px;
`;

const toolArt: Record<string, React.ReactNode> = {
  select: (
    <>
      <rect x="2.500" y="2.500" width="24" height="24" fill="none" stroke="#eba637" strokeWidth="1.800" strokeDasharray="4 2" />
      <path d="M11 8v12l3.500-3 5.500-.5z" fill="#ececec" />
    </>
  ),
  cursor: (
    <>
      <circle cx="14.500" cy="14.500" r="12.500" fill="none" stroke="#eee" strokeWidth="1.500" />
      <circle cx="14.500" cy="14.500" r="12.500" fill="none" stroke="#b8484a" strokeWidth="1.500" strokeDasharray="6 3.820" />
      <path d="M14.500 7v5M14.500 17v5M7 14.500h5M17 14.500h5" stroke="#8c8c8c" />
    </>
  ),
  move: (
    <>
      <path d="M14.500 2l3 5h-6zM14.500 27l3-5h-6zM2 14.500l5-3v6zM27 14.500l-5-3v6z" fill="#eee" />
      <path d="M14.500 7v5M14.500 17v5M7 14.500h5M17 14.500h5" stroke="#eee" strokeWidth="1.800" />
    </>
  ),
  rotate: (
    <>
      <path d="M5 11a10.500 10.500 0 0 1 18-3.500M24.500 17.500a10.500 10.500 0 0 1-18 4" fill="none" stroke="#eee" strokeWidth="1.500" />
      <path d="M2 14h6l-3 5zM27 15h-6l3-5z" fill="#eee" />
      <path d="M14.500 10.500l4 4-4 4-4-4z" fill="#bbb" />
    </>
  ),
  scale: (
    <>
      <path d="M5.500 14V5.500h18v18H15" fill="none" stroke="#8c8c8c" strokeWidth="1.500" />
      <rect x="4.500" y="14.500" width="10" height="10" fill="#eee" />
      <path d="M15 14l4-4M17 7.500h4.500v4.500z" stroke="#eee" fill="#eee" strokeWidth="1.400" />
    </>
  ),
  transform: (
    <>
      <circle cx="14.500" cy="14.500" r="11" fill="none" stroke="#ddd" strokeWidth="1.300" strokeDasharray="11 6.280" strokeDashoffset="-3" />
      <rect x="10" y="10" width="9" height="9" fill="#eee" />
      <path d="M14.500 2l3 4.500h-6zM14.500 27l3-4.500h-6zM2 14.500l4.500-3v6zM27 14.500l-4.500-3v6z" fill="#eee" />
    </>
  ),
  annotate: (
    <>
      <path d="M3 21q5 4 10-1 6-6 10-3.500 3 1.500 4.500 4" fill="none" stroke="#8fd9ae" strokeWidth="1.500" />
      <path d="M18 1.500l3.500 3.500L6.500 18.500 1.500 20l2-5z" fill="#eee" />
    </>
  ),
  measure: (
    <>
      <path d="M4 1h6v21M4 1v26h23v-5h-17" fill="#ddd" />
      <path d="M11 11q9 1 9.500 10H11z" fill="#8fd9ae" />
      <path d="M11 9q12 1 12 12" fill="none" stroke="#8fd9ae" />
      <path d="M7 4h4M7 7h4M7 10h4M7 13h4M7 16h4M7 19h4M11 26v-4M14 26v-4M17 26v-4M20 26v-4M23 26v-4" stroke="#242424" />
    </>
  ),
  addCube: (
    <>
      <path d="M4.500 0v8M.500 4h8" stroke="#8fd9ae" strokeWidth="2.200" />
      <path d="M6 11.500h15.500v15H6zM6 11.500l5-6h16v15l-5.500 6M21.500 11.500l5.500-6" fill="none" stroke="#8fd9ae" strokeWidth="1.300" />
    </>
  ),
};

const toolGroups: { name: string; more?: boolean }[][] = [
  [{ name: "select", more: true }, { name: "cursor" }],
  [{ name: "move" }, { name: "rotate" }, { name: "scale", more: true }, { name: "transform" }],
  [{ name: "annotate", more: true }, { name: "measure" }],
  [{ name: "addCube", more: true }],
];

const Gizmo = styled.svg`
  position: absolute;
  right: 14px;
  top: 70px;
  width: 90px;
  height: 90px;
`;

const NavStack = styled.div`
  position: absolute;
  right: 10px;
  top: 162px;
  display: flex;
  flex-direction: column;
  gap: 2px;
`;

const NavBtn = styled.button`
  width: 32px;
  height: 32px;
  border-radius: 50%;
  background: #2b2b2bcc;
  color: #dcdcdc;
`;

const Viewport = () => (
  <Area $grow={499} $bg="#3d3d3d">
    <Scene3D />
    <AreaHeader $bg="#313131e6" $pad={10} $gap={7}>
      <Drop icon="gridBall" label="Editor type" />
      <Select value="Object Mode" label="Mode" icon="object" w="125px" />
      <Menus>
        {["View", "Select", "Add", "Object"].map((m) => <MenuBtn key={m}>{m}</MenuBtn>)}
      </Menus>
      <Fill $n={254} />
      <Select value="Global" label="Orientation" icon="axes" w="86px" />
      <Drop icon="pivot" label="Pivot point" />
      <Joined>
        <HeaderBtn $w={22} $grey aria-label="Snapping"><Icon name="magnet" color="#a8a8a8" /></HeaderBtn>
        <Drop icon="snapInc" label="Snap to" />
      </Joined>
      <Joined>
        <HeaderBtn $w={22} $grey aria-label="Proportional editing"><Icon name="proportional" /></HeaderBtn>
        <HeaderBtn $w={35} $dim aria-label="Falloff">
          <Icon name="falloff" size={17} />
          <Icon name="chevron" size={13} />
        </HeaderBtn>
      </Joined>
      <Fill $n={541} />
      <Joined $gap>
        <HeaderBtn $w={21} $grey aria-label="Wireframe"><Icon name="online" size={17} /></HeaderBtn>
        <HeaderBtn $w={21} $grey aria-label="Solid"><Icon name="record" size={17} /></HeaderBtn>
        <HeaderBtn $w={21} $on aria-label="Material preview"><Icon name="matSphere" color="#fff" /></HeaderBtn>
        <HeaderBtn $w={21} $grey aria-label="Rendered"><Icon name="rendered" color="#b8b8b8" /></HeaderBtn>
        <HeaderBtn $w={23} aria-label="Shading options"><Icon name="chevron" size={14} /></HeaderBtn>
      </Joined>
    </AreaHeader>
    <SubHeader>
      <SelectModes list={["selNew", "selAdd", "selSub", "selDiff", "selAnd"]} />
    </SubHeader>
    <ViewBody>
      <ToolShelf>
        {toolGroups.map((g) => (
          <ToolGroup key={g[0].name}>
            {g.map((t) => (
              <Tool key={t.name} $on={t.name === "select"} $more={t.more} aria-label={t.name}>
                <Svg viewBox="0 0 29 29" $size={29}>{toolArt[t.name]}</Svg>
              </Tool>
            ))}
          </ToolGroup>
        ))}
      </ToolShelf>
      <ViewInfo>
        <span>User Perspective</span>
        <span>(1) Collection | Cube</span>
      </ViewInfo>
    </ViewBody>
    <Gizmo viewBox="1480 547 90 90" aria-label="View axes">
      <circle cx="1503" cy="579" r="8.500" fill="#4b5a30" stroke="#6b9a26" strokeWidth="1.200" />
      <circle cx="1555" cy="581" r="8.500" fill="#5a3a40" stroke="#b33a4c" strokeWidth="1.200" />
      <circle cx="1527" cy="624" r="8.500" fill="#364a66" stroke="#3069b0" strokeWidth="1.200" />
      <path d="M1527 592V560" stroke="#2b82e8" strokeWidth="2" />
      <path d="M1527 592L1550 605" stroke="#84c40f" strokeWidth="2" />
      <path d="M1527 592L1499 602" stroke="#ee3b55" strokeWidth="2" />
      <circle cx="1499" cy="602" r="9.500" fill="#ee3b55" />
      <circle cx="1527" cy="559.500" r="9.500" fill="#2b82e8" />
      <circle cx="1550" cy="605" r="9.500" fill="#84cc13" />
      <g fontFamily="Inter, sans-serif" fontSize="12" fontWeight="600" textAnchor="middle">
        <text x="1527" y="564" fill="#10243f">Z</text>
        <text x="1550" y="609" fill="#22380a">Y</text>
      </g>
    </Gizmo>
    <NavStack>
      {["zoomIn", "hand", "cameraLine", "persp"].map((n) => (
        <NavBtn key={n} aria-label={n}><Icon name={n} size={20} /></NavBtn>
      ))}
    </NavStack>
    <SideToggle $right $y={83} aria-label="Sidebar"><Icon name="left" size={13} /></SideToggle>
  </Area>
);

/* --------------------------------------------------------------- timeline */

const PlainNum = styled.label<{ $w: number; $center?: boolean }>`
  display: flex;
  align-items: center;
  justify-content: ${(p) => (p.$center ? "center" : "space-between")};
  width: ${(p) => p.$w}px;
  height: 23px;
  padding: 0 15px;
  background: ${c.toggle};
  border-radius: 4px;
  input {
    width: 34px;
    text-align: ${(p) => (p.$center ? "center" : "right")};
    font-variant-numeric: tabular-nums;
  }
`;

const DarkNum = styled(PlainNum)`
  background: ${c.widget};
  border: 1px solid ${c.line};
  border-radius: 0;
`;

const Ruler = styled.div`
  position: relative;
  display: grid;
  grid-template-columns: repeat(25, 1fr);
  align-items: center;
  height: 26px;
  padding: 2px 31px 0 83px;
  background: #1d1d1d;
  color: #a8a8a8;
  text-align: center;
  font-variant-numeric: tabular-nums;
`;

const Track = styled.div`
  display: grid;
  grid-template-columns: repeat(25, 1fr);
  flex: 1;
  padding: 0 31px 0 83px;
  background: linear-gradient(90deg, #222 59px, #2e2e2e 59px calc(100% - 58px), #222 calc(100% - 58px));
`;

const TickCell = styled.div`
  border-left: 1px solid #242424;
  background: linear-gradient(#171717, #171717) center / 1px 100% no-repeat;
`;

const Playhead = styled.div`
  position: absolute;
  left: 45px;
  top: 32px;
  bottom: 0;
  width: 28px;
  background: linear-gradient(${c.blue}, ${c.blue}) center / 2px 100% no-repeat;
  span {
    display: block;
    height: 21px;
    line-height: 22px;
    border-radius: 4px;
    text-align: center;
    background: ${c.blue};
    color: #fff;
  }
`;

const TrackBar = styled.div`
  position: absolute;
  left: 14px;
  right: 14px;
  bottom: 3px;
  height: 4px;
  background: #3d3d3d;
`;

const Timeline = () => (
  <Area $grow={77} $bg="#1d1d1d">
    <AreaHeader $bg={c.header} $low>
      <Drop icon="clock" label="Editor type" />
      <Joined>
        <Select value="Playback" label="Playback" w="82px" />
        <Select value="Keying" label="Keying" w="69px" />
      </Joined>
      <Menus>
        <MenuBtn>View</MenuBtn>
        <MenuBtn>Marker</MenuBtn>
      </Menus>
      <Fill $n={370} />
      <Joined>
        <HeaderBtn $w={22} $grey aria-label="Auto keying"><Icon name="record" color="#8c8c8c" /></HeaderBtn>
        <HeaderBtn $w={22} $dim aria-label="Auto keying options"><Icon name="chevron" size={13} /></HeaderBtn>
      </Joined>
      <Joined $gap>
        {["first", "prevKey", "playBack", "play", "nextKey", "last"].map((n) => (
          <HeaderBtn key={n} $w={22} $grey aria-label={n}><Icon name={n} size={19} color="#e6e6e6" /></HeaderBtn>
        ))}
      </Joined>
      <Fill $n={387} />
      <PlainNum $w={83} $center><input defaultValue="1" aria-label="Current frame" /></PlainNum>
      <Joined>
        <HeaderBtn $w={23} aria-label="Preview range"><Icon name="stopwatch" /></HeaderBtn>
        <DarkNum $w={103}>Start<input defaultValue="1" /></DarkNum>
        <DarkNum $w={94}>End<input defaultValue="250" /></DarkNum>
      </Joined>
    </AreaHeader>
    <Ruler>
      {Array.from({ length: 25 }, (_, i) => <span key={i}>{(i + 1) * 10}</span>)}
    </Ruler>
    <Track>
      {Array.from({ length: 25 }, (_, i) => <TickCell key={i} />)}
    </Track>
    <TrackBar />
    <Playhead><span>1</span></Playhead>
    <SideToggle $y={55} aria-label="Channels"><Icon name="right" size={13} /></SideToggle>
    <SideToggle $right $y={55} aria-label="Timeline sidebar"><Icon name="left" size={13} /></SideToggle>
  </Area>
);

/* --------------------------------------------------------------- outliner */

const Tree = styled.div`
  flex: 1;
  background: repeating-linear-gradient(#282828 0 23px, #2b2b2b 23px 46px);
`;

const TreeRow = styled.div<{ $depth: number; $sel?: boolean }>`
  display: flex;
  align-items: center;
  height: 23px;
  gap: 6px;
  padding: 0 13px 0 ${(p) => 3 + p.$depth * 24}px;
  background-color: ${(p) => (p.$sel ? "#1e304f" : "transparent")};
  ${(p) =>
    p.$depth > 1 &&
    css`
      background-image: linear-gradient(#5a5a5a, #5a5a5a);
      background-size: 1px 100%;
      background-position: 34px 0;
      background-repeat: no-repeat;
    `}
`;

const Twist = styled.button`
  width: 14px;
  height: 20px;
  color: #bdbdbd;
`;

const ItemIcon = styled.span<{ $box?: boolean }>`
  display: grid;
  place-items: center;
  width: 22px;
  height: 21px;
  border-radius: 4px;
  background: ${(p) => (p.$box ? "#505050" : "transparent")};
`;

const ItemName = styled.span<{ $c?: string }>`
  color: ${(p) => p.$c || "#c8c8c8"};
`;

const RowEnd = styled.span`
  display: flex;
  gap: 7px;
  margin-left: auto;
  color: #e0e0e0;
`;

const DataIcon = styled(ItemIcon)`
  margin-left: 14px;
`;

const items = [
  { name: "Camera", icon: "camera", data: "cameraLine", dataBox: true },
  { name: "Cube", icon: "cubeTri", data: "mesh", box: true },
  { name: "Light", icon: "bulb", data: "lightData", sel: true },
];

const Outliner = () => (
  <Area $grow={319} $bg="#282828">
    <AreaHeader $bg="#2b2b2b" $pad={10}>
      <Drop icon="outliner" label="Editor type" />
      <Drop icon="viewlayer" label="Display mode" />
      <Fill $n={1} />
      <SearchBox><Icon name="search" /><input placeholder="Search" aria-label="Filter outliner" /></SearchBox>
      <Fill $n={3} />
      <Drop icon="filter" label="Filter" />
      <HeaderBtn $w={23} $grey aria-label="New collection"><Icon name="newCollection" /></HeaderBtn>
    </AreaHeader>
    <Tree>
      <TreeRow $depth={1}>
        <Icon name="collection" />
        <ItemName>Scene Collection</ItemName>
      </TreeRow>
      <TreeRow $depth={1}>
        <Twist aria-label="Collapse"><Icon name="open" size={16} /></Twist>
        <ItemIcon $box><Icon name="collection" /></ItemIcon>
        <ItemName $c="#fff">Collection</ItemName>
        <RowEnd><Icon name="tick" size={16} /><Icon name="eye" size={17} /><Icon name="photo" size={17} /></RowEnd>
      </TreeRow>
      {items.map((it) => (
        <TreeRow key={it.name} $depth={2} $sel={it.sel}>
          <Twist aria-label="Expand"><Icon name="right" size={17} /></Twist>
          <ItemIcon $box={it.box}><Icon name={it.icon} color={c.orange} /></ItemIcon>
          <ItemName $c={it.sel ? "#e8640c" : undefined}>{it.name}</ItemName>
          <DataIcon $box={it.dataBox}><Icon name={it.data} color={c.green} /></DataIcon>
          <RowEnd><Icon name="eye" size={17} /><Icon name="photo" size={17} /></RowEnd>
        </TreeRow>
      ))}
    </Tree>
  </Area>
);

/* ------------------------------------------------------------- properties */

const PropsBody = styled.div`
  display: flex;
  flex: 1;
  min-height: 0;
`;

const NavCol = styled.div`
  display: flex;
  flex-direction: column;
  width: 33px;
  flex: none;
  padding: 9px 0 0 3px;
  background: #1d1d1d;
`;

const NavItem = styled.button<{ $on?: boolean; $gap?: boolean }>`
  height: 32px;
  flex: none;
  border-radius: 5px 0 0 5px;
  background: ${(p) => (p.$on ? "#303030" : "transparent")};
  ${(p) => p.$gap && css`margin-top: 8px;`}
`;

const navItems: [string, string, boolean?][] = [
  ["tools", "#a8a8a8"],
  ["render", "#e0e0e0", true],
  ["output", "#a8a8a8"],
  ["viewlayer", "#a8a8a8"],
  ["scene", "#a8a8a8"],
  ["world", c.red],
  ["collectionLine", "#b8b8b8", true],
  ["object", c.orange, true],
  ["wrench", c.mod],
  ["particles", c.mod],
  ["physics", c.mod],
  ["constraint", c.mod],
  ["mesh", c.green],
  ["material", c.red],
  ["texture", c.red, true],
];

const Panels = styled.div`
  display: flex;
  flex-direction: column;
  gap: 2px;
  flex: 1;
  padding: 0 1px 0 9px;
`;

const Panel = styled.div`
  flex: none;
  border-radius: 4px;
  background: ${c.panel};
  overflow: hidden;
`;

const PanelSliver = styled(Panel)`
  height: 5px;
  border-radius: 0 0 4px 4px;
`;

const PanelHead = styled.div<{ $sub?: boolean; $bg?: string }>`
  display: flex;
  align-items: center;
  gap: 3px;
  height: 28px;
  padding: 0 12px 0 ${(p) => (p.$sub ? 20 : 4)}px;
  background: ${(p) => p.$bg || "transparent"};
`;

const HeadRight = styled.span`
  display: flex;
  align-items: center;
  gap: 9px;
  margin-left: auto;
`;

const PanelBody = styled.div<{ $bg?: string; $gap?: number }>`
  display: flex;
  flex-direction: column;
  gap: ${(p) => p.$gap ?? 6}px;
  padding: 10px;
  background: ${(p) => p.$bg || "transparent"};
`;

const PropRow = styled.div`
  display: grid;
  grid-template-columns: 99fr 150fr;
  gap: 11px;
  align-items: center;
  min-height: 22px;
  > span:first-child { text-align: right; }
`;

const Stack = styled.div`
  display: flex;
  flex-direction: column;
  > div:not(:last-child) label { border-bottom: 0; }
  > div:first-child label { border-radius: 4px 4px 0 0; }
  > div:nth-child(2) label { border-radius: 0; }
  > div:last-child label { border-radius: 0 0 4px 4px; }
`;

const WideButton = styled.button`
  display: grid;
  grid-template-columns: 18px 1fr;
  height: 22px;
  padding-left: 4px;
  border-radius: 3px;
  background: ${c.toggle};
`;

const SizeInput = styled.input`
  width: 100%;
  height: 22px;
  border-radius: 4px;
  background: ${c.toggle};
  text-align: center;
  font-variant-numeric: tabular-nums;
`;

const ScrollLane = styled.div`
  display: flex;
  flex-direction: column;
  justify-content: flex-end;
  width: 9px;
  padding: 0 3px 14px 2px;
`;

const Thumb = styled.div`
  height: 48%;
  border-radius: 2px;
  background: #494949;
`;

const Head = ({ title, open, check, sub, extra, bg }: { title: string; open?: boolean; check?: boolean; sub?: boolean; extra?: boolean; bg?: string }) => (
  <PanelHead $sub={sub} $bg={bg}>
    <Icon name={open ? "open" : "right"} />
    {check ? <CheckLabel><Check />{title}</CheckLabel> : <span>{title}</span>}
    {!sub && (
      <HeadRight>
        {extra && <Icon name="sliders" />}
        <Grip />
      </HeadRight>
    )}
  </PanelHead>
);

const Prop = ({ label, value }: { label: string; value: string }) => (
  <PropRow>
    <span>{label}</span>
    <Select value={value} label={label} h={22} />
  </PropRow>
);

const Properties = () => (
  <Area $grow={677} $bg="#303030">
    <AreaHeader $bg={c.header} $pad={10}>
      <Drop icon="props" label="Editor type" />
      <Fill $n={5} />
      <SearchBox><Icon name="search" /><input placeholder="Search" aria-label="Search properties" /></SearchBox>
      <Fill $n={7} />
      <HeaderBtn $w={23} aria-label="Options"><Icon name="chevron" size={14} /></HeaderBtn>
    </AreaHeader>
    <PropsBody>
      <NavCol>
        {navItems.map(([n, col, gap]) => (
          <NavItem key={n} $gap={gap} $on={n === "render"} aria-label={n}><Icon name={n} color={col} /></NavItem>
        ))}
      </NavCol>
      <Panels>
        <PanelSliver />
        <Panel><Head title="Motion Blur" check /></Panel>
        <Panel><Head title="Film" /></Panel>
        <Panel><Head title="Performance" extra /></Panel>
        <Panel>
          <Head title="Bake" open />
          <PanelBody>
            <WideButton><Icon name="bake" /><span>Bake</span></WideButton>
            <PropRow><span /><CheckLabel><Check />Bake from Multires</CheckLabel></PropRow>
            <Prop label="Bake Type" value="Normal" />
          </PanelBody>
          <Head title="Influence" open sub />
          <PanelBody $bg="#353535" $gap={2}>
            <Prop label="Space" value="Tangent" />
            <Stack>
              <Prop label="Swizzle R" value="+X" />
              <Prop label="G" value="+Y" />
              <Prop label="B" value="+Z" />
            </Stack>
          </PanelBody>
          <Head title="Selected to Active" check sub />
          <Head title="Output" open sub />
          <PanelBody $bg="#353535">
            <Prop label="Target" value="Image Textures" />
            <PropRow><span /><CheckLabel><Check defaultChecked />Clear Image</CheckLabel></PropRow>
          </PanelBody>
          <Head title="Margin" open sub bg="#353535" />
          <PanelBody $bg="#2e2e2e">
            <PropRow><span>Size</span><SizeInput defaultValue="16 px" aria-label="Margin size" /></PropRow>
          </PanelBody>
        </Panel>
        <Panel><Head title="Grease Pencil" /></Panel>
        <Panel><Head title="Freestyle" check /></Panel>
        <Panel><Head title="Color Management" /></Panel>
      </Panels>
      <ScrollLane><Thumb /></ScrollLane>
    </PropsBody>
  </Area>
);

/* ------------------------------------------------------------------ menus */

const MenuBox = styled.div<{ $x: number; $y: number; $w: number; $pad?: string }>`
  position: absolute;
  display: flex;
  flex-direction: column;
  left: ${(p) => p.$x}px;
  top: ${(p) => p.$y}px;
  width: ${(p) => p.$w}px;
  padding: ${(p) => p.$pad || "4px 3px 2px"};
  border: 1px solid #242424;
  border-radius: 5px;
  background: ${c.menu};
  box-shadow: 0 2px 6px #00000060;
`;

const MenuTitle = styled.div`
  height: 27px;
  padding: 8px 6px 0;
  color: ${c.dim};
`;

const MenuRule = styled.hr`
  align-self: stretch;
  height: 1px;
  margin: 3px;
  border: 0;
  background: #303030;
`;

const MenuItem = styled.button<{ $on?: boolean; $indent: number }>`
  height: 21px;
  margin: 1px 0;
  padding: 0 3px 0 ${(p) => p.$indent}px;
  justify-content: flex-start;
  border-radius: 4px;
  background: ${(p) => (p.$on ? "#424242" : "transparent")};
  color: ${(p) => (p.$on ? "#fff" : "#dcdcdc")};
  u { text-underline-offset: 2px; }
`;

const Lead = styled.span`
  display: grid;
  place-items: center;
  width: 20px;
  margin-right: 7px;
`;

const Shortcut = styled.span`
  margin-left: auto;
  margin-right: 2px;
  color: #7d7d7d;
`;

const ArrowSlot = styled.span`
  width: 8px;
  color: #9a9a9a;
`;

const SubArrow = styled(ArrowSlot)`
  margin-left: auto;
`;

const Tooltip = styled.div`
  position: absolute;
  left: 1394px;
  top: 504px;
  padding: 8px 13px;
  border: 1px solid #242424;
  border-radius: 4px;
  background: #1a1a1a;
  white-space: nowrap;
`;

const Scribble = styled.svg`
  position: absolute;
  left: 1210px;
  top: 440px;
  width: 210px;
  height: 80px;
  pointer-events: none;
`;

const nodeMenu: ([string, string, string?] | null)[] = [
  ["Add", "Shift A", "plus"],
  ["Paste", "Ctrl V", "paste"],
  null,
  ["Find...", "Ctrl F", "search"],
  null,
  ["Cut Links", "Ctrl drag - Right Mouse"],
  ["Mute Links", "Ctrl Alt drag - Right Mouse"],
];

const addMenu = ["Input", "Output", "", "Color", "Converter", "Shader", "Texture", "Vector", "", "Script", "", "Group", "Layout"];

const textureMenu = [
  "Multiple Images", "Image Sequence", "", "Brick Texture", "Checker Texture", "Environment Texture", "Gabor Texture",
  "Gradient Texture", "IES Texture", "Image Texture", "Magic Texture", "Noise Texture", "Point Density", "Sky Texture",
  "Voronoi Texture", "Wave Texture", "White Noise Texture",
];

const Popups = () => (
  <>
    <MenuBox $x={674} $y={124} $w={277} $pad="0 3px 3px" role="menu">
      <MenuTitle>Node</MenuTitle>
      <MenuRule />
      {nodeMenu.map((m, i) =>
        m ? (
          <MenuItem key={i} $indent={6} $on={i === 0} role="menuitem">
            <Lead>{m[2] && <Icon name={m[2]} size={18} />}</Lead>
            <span><u>{m[0][0]}</u>{m[0].slice(1)}</span>
            <Shortcut>{m[1]}</Shortcut>
            <ArrowSlot>{i === 0 && <Icon name="tri" size={8} />}</ArrowSlot>
          </MenuItem>
        ) : (
          <MenuRule key={i} />
        ),
      )}
    </MenuBox>
    <MenuBox $x={951} $y={154} $w={276} role="menu">
      {addMenu.map((m, i) =>
        m ? (
          <MenuItem key={i} $indent={31} $on={m === "Texture"} role="menuitem">
            {m}
            <SubArrow><Icon name="tri" size={8} /></SubArrow>
          </MenuItem>
        ) : (
          <MenuRule key={i} />
        ),
      )}
    </MenuBox>
    <MenuBox $x={1226} $y={277} $w={276} $pad="2px" role="menu">
      {textureMenu.map((m, i) =>
        m ? (
          <MenuItem key={i} $indent={33} $on={m === "Image Texture"} role="menuitem">{m}</MenuItem>
        ) : (
          <MenuRule key={i} />
        ),
      )}
    </MenuBox>
    <Tooltip role="tooltip">Sample an image file as a texture.</Tooltip>
    <Scribble viewBox="1210 440 210 80" aria-hidden="true">
      <path
        d="M1407 474Q1396 464 1375 459T1345 453 1290 453Q1278 456 1262 461T1228 473Q1220 479 1221 489 1223 500 1240 502 1258 502 1272 502 1290 509 1310 510H1370Q1388 510 1398 500 1405 493 1406 475"
        fill="none"
        stroke="#e81c1c"
        strokeWidth="7"
        strokeLinejoin="round"
        strokeLinecap="round"
      />
    </Scribble>
  </>
);

/* ------------------------------------------------------------- status bar */

const Status = styled.footer`
  display: flex;
  align-items: center;
  height: 23px;
  flex: none;
  gap: 3px;
  padding: 0 15px 0 11px;
  background: ${c.back};
  border-bottom: 1px solid #d8d8d8;
  color: #8f8f8f;
`;

const Key = styled.kbd`
  height: 18px;
  padding: 0 2px;
  line-height: 16px;
  border: 1px solid #8f8f8f;
  border-radius: 3px;
  font-family: inherit;
  font-size: 11px;
`;

const Version = styled.span`
  display: flex;
  align-items: center;
  gap: 8px;
  margin-left: auto;
  font-variant-numeric: tabular-nums;
`;

/* -------------------------------------------------------------------- app */

const LayerSlot = styled.div`
  margin-left: 6px;
`;

const workspaces = [
  "Layout", "Modeling", "Sculpting", "UV Editing", "Texture Paint", "Shading", "Animation", "Rendering",
  "Compositing", "Geometry Nodes", "Scripting",
];

export default function App() {
  return (
    <Root>
      <Global />
      <TitleBar>
        <svg width="17" height="17" viewBox="0 0 24 24" aria-hidden="true">
          <circle cx="15.700" cy="13.400" r="5" fill="#fff" />
          <SiBlender x="0" y="0" width="24" height="24" color="#ea7600" />
          <circle cx="15.700" cy="13.400" r="3.300" fill="#2a5fa8" />
        </svg>
        <span>* (Unsaved) - Blender 4.5.1 LTS</span>
        <Fill $n={1} />
        <WinBtn aria-label="Minimize"><svg width="10" height="10"><path d="M0 6.500h10" stroke="#fff" /></svg></WinBtn>
        <WinBtn aria-label="Restore">
          <svg width="11" height="12"><path d="M.500 3.500h7v8h-7zM2.500 3.500v-3h8v8h-3" fill="none" stroke="#fff" /></svg>
        </WinBtn>
        <WinBtn aria-label="Close"><svg width="11" height="11"><path d="M.500.500l10 10M10.500.500l-10 10" stroke="#fff" /></svg></WinBtn>
      </TitleBar>
      <TopEdge />
      <TopBar>
        <TopGroup $gap={1}>
          <SiBlender size={21} color="#d8d8d8" />
          {["File", "Edit", "Render", "Window", "Help"].map((m) => <MenuBtn key={m}>{m}</MenuBtn>)}
        </TopGroup>
        <Tabs>
          {workspaces.map((w) => <Tab key={w} $on={w === "Layout"}>{w}</Tab>)}
          <Tab aria-label="Add workspace"><Icon name="plus" size={16} /></Tab>
        </Tabs>
        <Fill $n={1} />
        <TopGroup $gap={0}>
          <Joined>
            <Drop icon="scene" label="Browse scene" />
            <FieldWithPin>
              <NameInput $w={92} defaultValue="Scene" aria-label="Scene name" />
              <Icon name="pin" />
            </FieldWithPin>
            <HeaderBtn $w={23} $grey aria-label="New scene"><Icon name="dup" /></HeaderBtn>
            <HeaderBtn $w={23} $dim aria-label="Delete scene"><Icon name="cross" size={15} color="#3c3c3c" /></HeaderBtn>
          </Joined>
          <LayerSlot>
            <Joined>
              <Drop icon="viewlayer" label="Browse view layer" />
              <NameInput $w={92} defaultValue="ViewLayer" aria-label="View layer name" />
              <HeaderBtn $w={23} $grey aria-label="New view layer"><Icon name="dup" /></HeaderBtn>
              <HeaderBtn $w={23} $dim aria-label="Delete view layer"><Icon name="cross" size={15} color="#3c3c3c" /></HeaderBtn>
            </Joined>
          </LayerSlot>
        </TopGroup>
      </TopBar>
      <Work>
        <Column>
          <NodeEditor />
          <Viewport />
          <Timeline />
        </Column>
        <Column>
          <Outliner />
          <Properties />
        </Column>
      </Work>
      <Status>
        <Key>Space</Key>
        <span>Search</span>
        <Version><Icon name="online" /><span>|&nbsp;&nbsp;4.5.1</span></Version>
      </Status>
      <Popups />
    </Root>
  );
}
